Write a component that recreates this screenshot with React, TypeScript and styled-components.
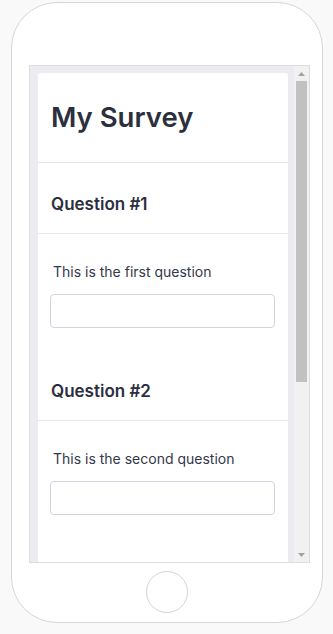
import React from "react";
import styled, { createGlobalStyle } from "styled-components";

const Global = createGlobalStyle`
  html, body { margin: 0; padding: 0; background: #f9f9f9; }
  body { font-family: Inter, "Noto Sans", sans-serif; }
  * { box-sizing: border-box; }
`;

const Page = styled.div`
  display: flex;
  padding: 2px 0 0 11px;
`;

const Phone = styled.div`
  width: 312px;
  height: 621px;
  background: #ffffff;
  border: 1px solid #d6d6d6;
  border-radius: 46px;
  padding: 62px 0 0 17px;
  display: flex;
  flex-direction: column;
`;

const Screen = styled.div`
  width: 281px;
  height: 498px;
  border: 1px solid #dcdce2;
  background: #ebebf0;
  display: flex;
`;

const Viewport = styled.div`
  flex: 1;
  overflow: hidden;
  padding: 7px 6px 0 8px;
`;

const Scrollbar = styled.div`
  width: 15px;
  background: #f1f1f1;
  display: flex;
  flex-direction: column;
`;

const ArrowButton = styled.div`
  height: 15px;
  display: flex;
  align-items: center;
  justify-content: center;
  color: #a3a3a3;
`;

const Track = styled.div`
  flex: 1;
  padding: 0 2px;
`;

const Thumb = styled.div`
  height: 301px;
  background: #c1c1c1;
`;

const Card = styled.div`
  background: #ffffff;
  border-radius: 3px;
  padding-bottom: 40px;
`;

const Header = styled.div`
  padding: 26px 12px 27px 13px;
  border-bottom: 1px solid #e4e4ea;
`;

const Title = styled.h1`
  margin: 0;
  font-size: 27.5px;
  line-height: 36px;
  font-weight: 600;
  color: #2b2f3e;
`;

const QuestionHead = styled.div`
  padding: 31px 12px 19px 13px;
  border-bottom: 1px solid #e9e9ee;
`;

const QuestionTitle = styled.h2`
  margin: 0;
  font-size: 17px;
  line-height: 20px;
  font-weight: 600;
  color: #2b2f3e;
`;

const QuestionBody = styled.div`
  padding: 28px 13px 22px 12px;
  display: flex;
  flex-direction: column;
  gap: 12px;
`;

const QuestionText = styled.div`
  font-size: 14px;
  line-height: 20px;
  color: #34384a;
  padding-left: 3px;
`;

const Input = styled.input`
  width: 225px;
  height: 34px;
  border: 1px solid #d3d3df;
  border-radius: 4px;
  background: #ffffff;
  font-family: inherit;
  font-size: 14px;
  padding: 0 10px;
  outline: none;
`;

const Footer = styled.div`
  padding: 24px 13px 0;
`;

const SubmitButton = styled.button`
  height: 36px;
  padding: 0 20px;
  border: none;
  border-radius: 4px;
  background: #19b394;
  color: #ffffff;
  font-family: inherit;
  font-size: 14px;
  font-weight: 600;
`;

const HomeArea = styled.div`
  flex: 1;
  display: flex;
  align-items: center;
  justify-content: center;
  padding-right: 17px;
  padding-bottom: 2px;
`;

const HomeButton = styled.div`
  width: 42px;
  height: 42px;
  border-radius: 50%;
  border: 1px solid #d3d3d3;
`;

const questions = [
  { title: "Question #1", text: "This is the first question" },
  { title: "Question #2", text: "This is the second question" },
  { title: "Question #3", text: "This is the third question" },
];

const Triangle = ({ up }: { up?: boolean }) => (
  <svg width="7" height="4" viewBox="0 0 7 4">
    <polygon points={up ? "3.5,0 7,4 0,4" : "0,0 7,0 3.5,4"} fill="currentColor" />
  </svg>
);

export default function App() {
  return (
    <>
      <Global />
      <Page>
        <Phone>
          <Screen>
            <Viewport>
              <Card>
                <Header>
                  <Title>My Survey</Title>
                </Header>
                {questions.map((q) => (
                  <React.Fragment key={q.title}>
                    <QuestionHead>
                      <QuestionTitle>{q.title}</QuestionTitle>
                    </QuestionHead>
                    <QuestionBody>
                      <QuestionText>{q.text}</QuestionText>
                      <Input type="text" />
                    </QuestionBody>
                  </React.Fragment>
                ))}
                <Footer>
                  <SubmitButton>Complete</SubmitButton>
                </Footer>
              </Card>
            </Viewport>
            <Scrollbar>
              <ArrowButton>
                <Triangle up />
              </ArrowButton>
              <Track>
                <Thumb />
              </Track>
              <ArrowButton>
                <Triangle />
              </ArrowButton>
            </Scrollbar>
          </Screen>
          <HomeArea>
            <HomeButton />
          </HomeArea>
        </Phone>
      </Page>
    </>
  );
}
